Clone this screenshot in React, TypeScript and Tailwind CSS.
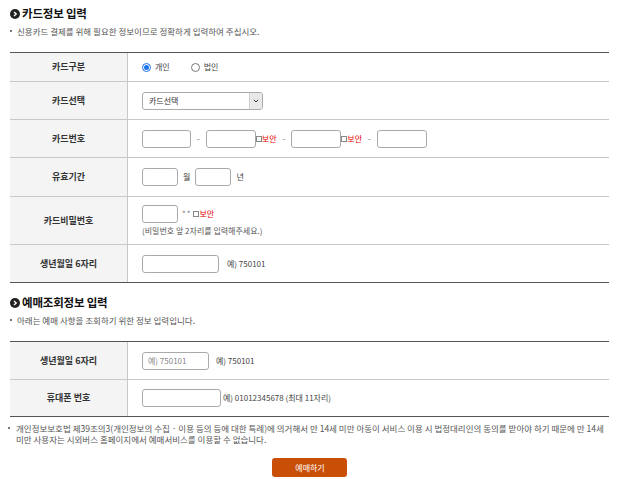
import React from "react";

const font = { fontFamily: '"Noto Sans CJK KR", "Noto Sans", sans-serif' };

const SectionTitle = ({ title, desc }: { title: string; desc: string }) => (
    <div className="px-[10px]">
        <div className="flex items-center gap-[2px] h-[22px]">
            <span className="w-[10px] h-[10px] rounded-full bg-[#222] flex items-center justify-center">
                <svg width="6" height="6" viewBox="0 0 6 6">
                    <path d="M2 1 L4.2 3 L2 5" stroke="#fff" strokeWidth="1.4" fill="none" />
                </svg>
            </span>
            <h2 className="text-[11.5px] font-bold text-[#111] tracking-[-0.2px]">{title}</h2>
        </div>
        <p className="flex items-center text-[8.5px] text-[#555] leading-[12px]">
            <span className="w-[2px] h-[2px] bg-[#777] mr-[5px]"></span>
            {desc}
        </p>
    </div>
);

const Row = ({ label, h, children }: { label: string; h: string; children: React.ReactNode }) => (
    <div className={`flex border-b border-[#c8c8c8] last:border-b-0 ${h}`}>
        <div className="w-[118px] shrink-0 bg-[#f4f4f4] border-r border-[#c8c8c8] flex items-center justify-center text-[9px] font-bold text-[#333]">
            {label}
        </div>
        <div className="flex-1 flex items-center pl-[14px] text-[8px] text-[#444]">{children}</div>
    </div>
);

const Box = ({ w, placeholder }: { w: string; placeholder?: string }) => (
    <input
        placeholder={placeholder}
        className={`${w} h-[18px] border border-[#aaa] rounded-[3px] bg-white text-[8px] px-[5px] placeholder:text-[#888] outline-none`}
    />
);

const Secure = ({ gap = "ml-0" }: { gap?: string }) => (
    <span className={`flex items-center ${gap}`}>
        <span className="w-[6px] h-[6px] border border-[#888] bg-white"></span>
        <span className="text-[#e60000]">보안</span>
    </span>
);

const Dash = () => <span className="mx-[6px] text-[#555]">-</span>;

export default function App() {
    return (
        <div style={font} className="w-[619px] h-[479px] bg-white pt-[3px] overflow-hidden">
            <SectionTitle title="카드정보 입력" desc="신용카드 결제를 위해 필요한 정보이므로 정확하게 입력하여 주십시오." />

            <div className="mx-[10px] mt-[15px] border-t border-b border-[#555]">
                <Row label="카드구분" h="h-[29px]">
                    <label className="flex items-center gap-[4px]">
                        <span className="w-[9px] h-[9px] rounded-full border border-[#1a73e8] flex items-center justify-center">
                            <span className="w-[5px] h-[5px] rounded-full bg-[#1a73e8]"></span>
                        </span>
                        개인
                    </label>
                    <label className="flex items-center gap-[4px] ml-[21px]">
                        <span className="w-[9px] h-[9px] rounded-full border border-[#777] bg-white"></span>
                        법인
                    </label>
                </Row>
                <Row label="카드선택" h="h-[38px]">
                    <div className="w-[121px] h-[18px] border border-[#aaa] rounded-[3px] flex items-stretch overflow-hidden">
                        <span className="flex-1 flex items-center pl-[6px] text-[#333]">카드선택</span>
                        <span className="w-[13px] bg-[#e9e9e9] border-l border-[#ccc] flex items-center justify-center">
                            <svg width="6" height="4" viewBox="0 0 6 4">
                                <path d="M0.8 0.8 L3 3 L5.2 0.8" stroke="#333" strokeWidth="1" fill="none" />
                            </svg>
                        </span>
                    </div>
                </Row>
                <Row label="카드번호" h="h-[38px]">
                    <Box w="w-[49px]" />
                    <Dash />
                    <Box w="w-[50px]" />
                    <Secure />
                    <Dash />
                    <Box w="w-[50px]" />
                    <Secure />
                    <Dash />
                    <Box w="w-[50px]" />
                </Row>
                <Row label="유효기간" h="h-[39px]">
                    <Box w="w-[36px]" />
                    <span className="mx-[5px]">월</span>
                    <Box w="w-[36px]" />
                    <span className="mx-[5px]">년</span>
                </Row>
                <Row label="카드비밀번호" h="h-[48px]">
                    <div className="flex flex-col">
                        <div className="flex items-center">
                            <Box w="w-[36px]" />
                            <span className="ml-[4px] text-[#777] tracking-[1px]">**</span>
                            <Secure gap="ml-[2px]" />
                        </div>
                        <span className="mt-[2px] text-[#555]">(비밀번호 앞 2자리를 입력해주세요.)</span>
                    </div>
                </Row>
                <Row label="생년월일 6자리" h="h-[37px]">
                    <Box w="w-[77px]" />
                    <span className="ml-[8px]">예) 750101</span>
                </Row>
            </div>

            <div className="mt-[9px]">
                <SectionTitle title="예매조회정보 입력" desc="아래는 예매 사항을 조회하기 위한 정보 입력입니다." />
            </div>

            <div className="mx-[10px] mt-[15px] border-t border-b border-[#555]">
                <Row label="생년월일 6자리" h="h-[38px]">
                    <Box w="w-[67px]" placeholder="예) 750101" />
                    <span className="ml-[7px]">예) 750101</span>
                </Row>
                <Row label="휴대폰 번호" h="h-[36px]">
                    <Box w="w-[79px]" />
                    <span className="ml-[2px]">예) 01012345678 (최대 11자리)</span>
                </Row>
            </div>

            <div className="flex px-[8px] mt-[6px] text-[8.5px] text-[#555] leading-[11px]">
                <span className="w-[2px] h-[2px] bg-[#777] mt-[4px] mr-[6px] shrink-0"></span>
                <p className="whitespace-nowrap">
                    개인정보보호법 제39조의3(개인정보의 수집 · 이용 등의 등에 대한 특례)에 의거해서 만 14세 미만 아동이 서비스 이용 시 법정대리인의 동의를 받아야 하기 때문에 만 14세
                    <br />
                    미만 사용자는 시외버스 홈페이지에서 예매서비스를 이용할 수 없습니다.
                </p>
            </div>

            <div className="flex justify-center mt-[13px]">
                <button className="w-[75px] h-[19px] rounded-[3px] bg-[#c94f07] text-white text-[8px] pl-[1px]">
                    예매하기
                </button>
            </div>
        </div>
    );
}
